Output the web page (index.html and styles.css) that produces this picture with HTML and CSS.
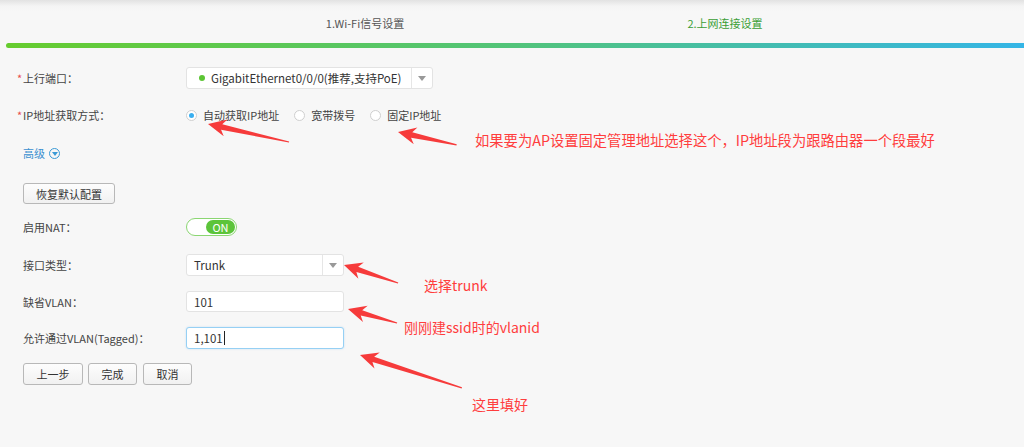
FILE: index.html
```html
<!DOCTYPE html>
<html>
<head>
    <title>上网连接设置</title>
    <link rel="stylesheet" href="styles.css">
</head>
<body>
    <div id="page">
        <div class="steps">
            <div class="step">1.Wi-Fi信号设置</div>
            <div class="step active">2.上网连接设置</div>
        </div>
        <div class="progress"></div>

        <div class="form">
            <div class="row row-port">
                <div class="label req">上行端口：</div>
                <div class="select select-port">
                    <div class="select-value"><span class="dot"></span>GigabitEthernet0/0/0(推荐,支持PoE)</div>
                    <div class="select-arrow"><span class="caret"></span></div>
                </div>
            </div>
            <div class="row row-ip">
                <div class="label req">IP地址获取方式：</div>
                <div class="radios">
                    <div class="radio checked"><span class="radio-box"></span>自动获取IP地址</div>
                    <div class="radio"><span class="radio-box"></span>宽带拨号</div>
                    <div class="radio"><span class="radio-box"></span>固定IP地址</div>
                </div>
            </div>
            <div class="row row-adv">
                <div class="advanced">高级<span class="adv-icon"><span class="adv-caret"></span></span></div>
            </div>
            <div class="row row-reset">
                <button class="btn btn-reset">恢复默认配置</button>
            </div>
            <div class="row row-nat">
                <div class="label">启用NAT：</div>
                <div class="toggle"><span class="toggle-knob">ON</span></div>
            </div>
            <div class="row row-type">
                <div class="label">接口类型：</div>
                <div class="select select-type">
                    <div class="select-value">Trunk</div>
                    <div class="select-arrow"><span class="caret"></span></div>
                </div>
            </div>
            <div class="row row-vlan">
                <div class="label">缺省VLAN：</div>
                <div class="input">101</div>
            </div>
            <div class="row row-tagged">
                <div class="label">允许通过VLAN(Tagged)：</div>
                <div class="input focus">1,101<span class="cursor"></span></div>
            </div>
            <div class="row row-actions">
                <button class="btn btn-prev">上一步</button>
                <button class="btn btn-done">完成</button>
                <button class="btn btn-cancel">取消</button>
            </div>
        </div>

        <!-- red annotations drawn over the form -->
        <svg class="arrows" width="1024" height="447" viewBox="0 0 1024 447">
            <g fill="#f63b3b">
                <polygon transform="translate(208,124) rotate(12.5)" points="0,0 18,-8.5 14,-2.8 83,-0.6 83,0.6 14,2.8 18,8.5"/>
                <polygon transform="translate(398,132) rotate(12.4)" points="0,0 18,-8.5 14,-2.8 60,-0.6 60,0.6 14,2.8 18,8.5"/>
                <polygon transform="translate(344,265) rotate(18.4)" points="0,0 18,-8.5 14,-2.8 57,-0.6 57,0.6 14,2.8 18,8.5"/>
                <polygon transform="translate(348,309) rotate(15.9)" points="0,0 18,-8.5 14,-2.8 51,-0.6 51,0.6 14,2.8 18,8.5"/>
                <polygon transform="translate(360,355) rotate(17.9)" points="0,0 18,-8.5 14,-2.8 107,-0.6 107,0.6 14,2.8 18,8.5"/>
            </g>
        </svg>
        <div class="note note-ip">如果要为AP设置固定管理地址选择这个，IP地址段为跟路由器一个段最好</div>
        <div class="note note-trunk">选择trunk</div>
        <div class="note note-vlan">刚刚建ssid时的vlanid</div>
        <div class="note note-fill">这里填好</div>
    </div>
</body>
</html>
```

FILE: styles.css
```css
body {
    margin: 0;
    padding: 0;
    background: #f7f7f7;
    font-family: "Noto Sans CJK SC", "Microsoft YaHei", sans-serif;
    font-size: 11px;
    color: #444;
}
#page {
    position: relative;
    width: 1024px;
    height: 447px;
    overflow: hidden;
    background: linear-gradient(#e2e2e2 0, #f4f4f4 6px, #f7f7f7 12px);
}
.steps {
    display: flex;
    padding: 15px 0 12px 185px;
    line-height: 16px;
}
.step {
    width: 360px;
    text-align: center;
    color: #555;
}
.step.active {
    color: #3a9e35;
}
.progress {
    margin-left: 6px;
    height: 5px;
    border-radius: 3px 0 0 3px;
    background: linear-gradient(90deg, #66cc2e 0%, #52c47a 50%, #34b5e6 100%);
}
.form {
    padding-left: 23px;
}
.row {
    display: flex;
    align-items: center;
    height: 22px;
    margin-top: 15px;
}
.row-port { margin-top: 19px; }
.row-adv { height: 16px; margin-top: 19px; }
.row-reset { margin-top: 22px; height: 21px; }
.row-nat { height: 18px; margin-top: 14px; }
.row-type { margin-top: 18px; }
.row-vlan { margin-top: 15px; height: 21px; }
.row-tagged { margin-top: 15px; }
.row-actions { margin-top: 14px; gap: 5px; }
.label {
    width: 163px;
    flex-shrink: 0;
    color: #444;
}
.label.req::before {
    content: "*";
    color: #e84c4c;
    margin-left: -6px;
    display: inline-block;
    width: 6px;
}
.select {
    display: flex;
    height: 100%;
    box-sizing: border-box;
    border: 1px solid #e3e3e3;
    border-radius: 3px;
    background: #fff;
}
.select-port { width: 247px; }
.select-type { width: 158px; }
.select-value {
    flex: 1;
    display: flex;
    align-items: center;
    padding-left: 7px;
    color: #333;
    font-size: 11.5px;
}
.dot {
    width: 6px;
    height: 6px;
    border-radius: 50%;
    background: #5cc534;
    margin: 0 6px 0 5px;
}
.select-arrow {
    width: 20px;
    border-left: 1px solid #e6e6e6;
    display: flex;
    align-items: center;
    justify-content: center;
}
.caret {
    width: 0;
    height: 0;
    border-left: 4px solid transparent;
    border-right: 4px solid transparent;
    border-top: 5px solid #999;
}
.radios {
    display: flex;
    gap: 15px;
}
.radio {
    display: flex;
    align-items: center;
    gap: 6px;
    color: #444;
}
.radio-box {
    width: 11px;
    height: 11px;
    box-sizing: border-box;
    border: 1px solid #cfcfcf;
    border-radius: 50%;
    background: #fff;
    display: flex;
    align-items: center;
    justify-content: center;
}
.radio.checked .radio-box::after {
    content: "";
    width: 5px;
    height: 5px;
    border-radius: 50%;
    background: #3aaff0;
}
.advanced {
    display: flex;
    align-items: center;
    gap: 4px;
    color: #3a8fd0;
}
.adv-icon {
    width: 11px;
    height: 11px;
    box-sizing: border-box;
    border: 1px solid #3a9ad6;
    border-radius: 50%;
    display: flex;
    align-items: center;
    justify-content: center;
}
.adv-caret {
    width: 0;
    height: 0;
    margin-top: 1px;
    border-left: 3px solid transparent;
    border-right: 3px solid transparent;
    border-top: 4px solid #3a9ad6;
}
.btn {
    height: 100%;
    box-sizing: border-box;
    padding: 0;
    border: 1px solid #b8b8b8;
    border-radius: 3px;
    background: linear-gradient(#fdfdfd, #f1f1f1);
    font-family: inherit;
    font-size: 11px;
    color: #333;
}
.row-actions .btn { height: 22px; }
.btn-reset { width: 92px; }
.btn-prev { width: 60px; }
.btn-done { width: 49px; }
.btn-cancel { width: 49px; margin-left: 1px; }
.toggle {
    width: 51px;
    height: 18px;
    box-sizing: border-box;
    border: 1px solid #8bd672;
    border-radius: 9px;
    background: #fff;
    display: flex;
    justify-content: flex-end;
    align-items: center;
    padding-right: 1px;
}
.toggle-knob {
    width: 29px;
    height: 14px;
    border-radius: 7px;
    background: #5cc43a;
    color: #fff;
    font-size: 11px;
    line-height: 14px;
    text-align: center;
}
.input {
    width: 158px;
    height: 100%;
    box-sizing: border-box;
    border: 1px solid #e3e3e3;
    border-radius: 3px;
    background: #fff;
    padding-left: 7px;
    display: flex;
    align-items: center;
    color: #333;
    font-size: 11.5px;
}
.input.focus {
    border-color: #96d0f4;
    box-shadow: 0 0 2px rgba(80, 170, 240, 0.3);
}
.cursor {
    width: 1px;
    height: 14px;
    background: #222;
    margin-left: 1px;
}
.arrows {
    position: absolute;
    top: 0;
    left: 0;
    pointer-events: none;
}
.note {
    position: absolute;
    color: #ff3d3d;
    font-size: 14px;
    line-height: 18px;
    white-space: nowrap;
}
.note-ip {
    left: 475px;
    top: 131px;
    font-size: 14.3px;
}
.note-trunk { left: 424px; top: 276px; }
.note-vlan { left: 404px; top: 318px; }
.note-fill { left: 472px; top: 395px; }
```
